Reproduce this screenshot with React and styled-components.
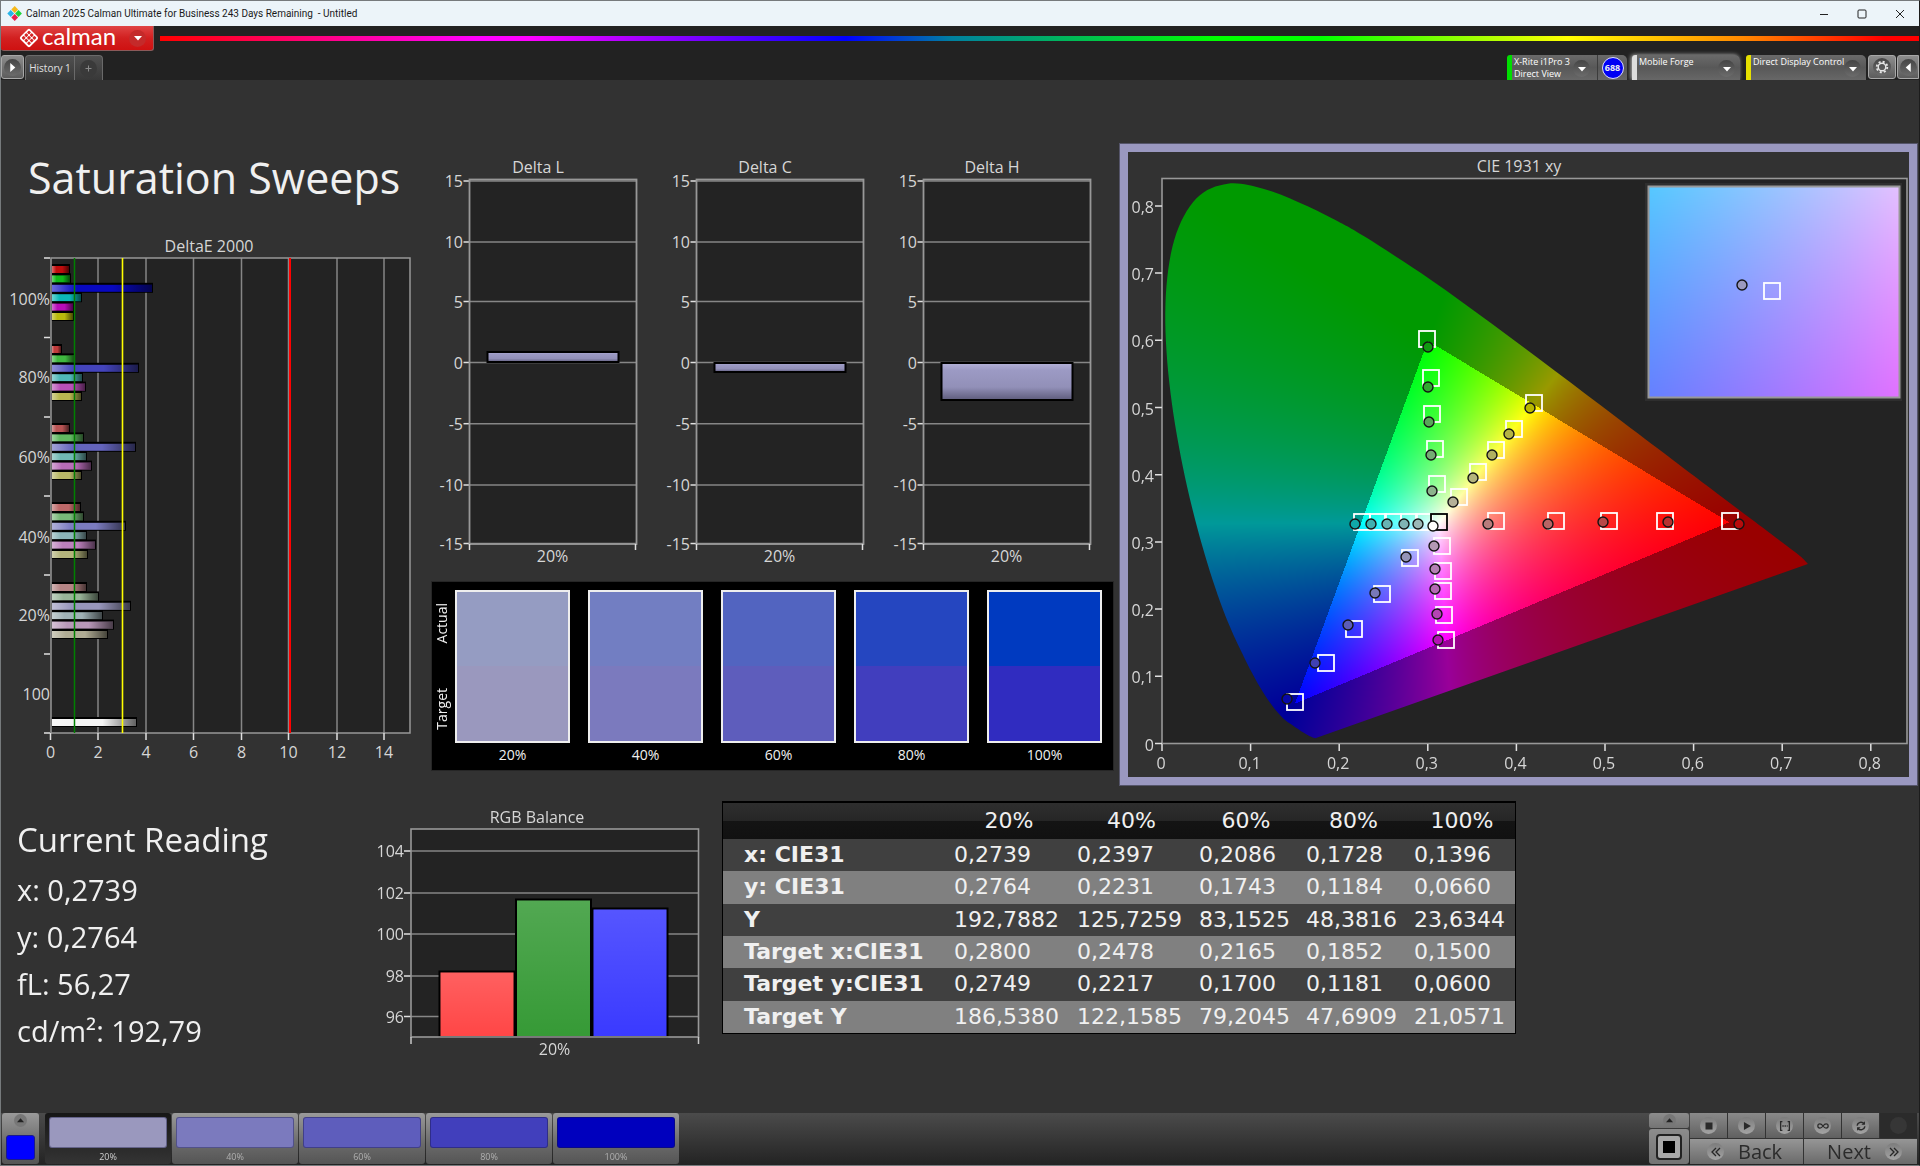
import React, { useEffect, useRef } from "react";
import styled, { createGlobalStyle } from "styled-components";

const GlobalStyle = createGlobalStyle`
  *, *::before, *::after { box-sizing: border-box; }
  body {
    margin: 0;
    background: #323232;
    color: #f0f0f0;
    font-family: "Open Sans", "Noto Sans", sans-serif;
  }
  button { font: inherit; color: inherit; border: 0; padding: 0; margin: 0; cursor: pointer; }
  h1, h2, p { margin: 0; font-weight: 400; }
`;

/* ---------- window frame ---------- */

const Window = styled.div`
  display: flex;
  flex-direction: column;
  min-height: 100vh;
  border: 1px solid #767a7c;
  border-right-color: #1c1c1c;
`;

const TitleBar = styled.header`
  display: flex;
  align-items: center;
  height: 25px;
  padding-left: 6px;
  background: #ecf4f9;
  color: #1a1a1a;
  font-family: Roboto, sans-serif;
  font-size: 10px;
  white-space: pre;
`;

const TitleText = styled.span`
  flex: 1;
  padding-left: 4px;
`;

const WindowButton = styled.button`
  display: grid;
  place-items: center;
  width: 38px;
  height: 25px;
  background: none;
`;

const Header = styled.div`
  background: #222;
`;

const BrandRow = styled.div`
  display: flex;
  align-items: flex-start;
  gap: 6px;
  height: 29px;
`;

const BrandButton = styled.button`
  display: flex;
  align-items: center;
  width: 153px;
  height: 25px;
  padding: 0 4px 0 18px;
  gap: 3px;
  border: 1px solid #8b5a5a;
  border-top: 0;
  border-left: 0;
  border-radius: 0 0 3px 3px;
  background: linear-gradient(#e04545, #d22020 50%, #cf1111);
  color: #fff;
`;

const BrandName = styled.span`
  flex: 1;
  text-align: left;
  font-family: Lato, sans-serif;
  font-size: 24px;
  line-height: 20px;
  height: 25px;
`;

const RoundMark = styled.span`
  display: grid;
  place-items: center;
  flex: none;
  width: ${(p) => p.$size || 17}px;
  height: ${(p) => p.$size || 17}px;
  border-radius: 50%;
  background: ${(p) => p.$fill || "linear-gradient(#454545, #6c6c6c)"};
`;

const Rainbow = styled.div`
  flex: 1;
  height: 5px;
  margin-top: 10px;
  background: linear-gradient(
    90deg,
    #f00 0%, #f0f 18%, #f0f 21%, #00f 39%, #0080a0 45%, #0f0 60%,
    #0f0 66%, #ff0 80%, #f80 90%, #f00 98%
  );
`;

const TabRow = styled.div`
  display: flex;
  align-items: flex-start;
  height: 25px;
`;

const Tab = styled.button`
  height: 25px;
  width: ${(p) => p.$width}px;
  display: grid;
  place-items: center;
  border: 1px solid #6a6a6a;
  border-bottom: 0;
  border-left-width: ${(p) => (p.$joined ? 0 : 1)}px;
  border-radius: ${(p) => (p.$joined ? "0 4px 0 0" : "4px 0 0 0")};
  background: linear-gradient(#505050, #383838);
  color: #e2e2e2;
  font-size: 10px;
`;

const SquareButton = styled.button`
  display: grid;
  place-items: center;
  height: 24px;
  width: ${(p) => p.$width}px;
  margin-right: ${(p) => p.$after || 0}px;
  border: 1px solid #a8a8a8;
  border-radius: ${(p) => p.$radius || "3px"};
  background: linear-gradient(#8d8d8d, #5c5c5c);
`;

const Spacer = styled.div`
  flex: 1;
`;

const SourceGroup = styled.div`
  display: flex;
  height: 25px;
  width: ${(p) => p.$width}px;
  margin-right: ${(p) => p.$after}px;
  border-left: 5px solid ${(p) => p.$accent};
  border-radius: 3px 5px 0 0;
  background: linear-gradient(#6a6a6a, #585858 50%, #676767);
  box-shadow: ${(p) => (p.$glow ? "-1px 0 4px #bbb" : "none")};
`;

const SourceButton = styled.button`
  flex: 1;
  display: flex;
  align-items: flex-start;
  justify-content: space-between;
  padding: 1px 5px 0 2px;
  background: none;
  color: #fff;
  font-size: 9px;
  line-height: 12px;
  text-align: left;
  white-space: nowrap;
`;

const SourceMark = styled(RoundMark)`
  margin-top: 4px;
`;

const CounterCell = styled.div`
  display: grid;
  place-items: center;
  width: 30px;
  margin-left: 2px;
  border-left: 1px solid #3c3c3c;
`;

const Counter = styled.span`
  width: 22px;
  height: 22px;
  border: 1px solid #dcdcff;
  border-radius: 50%;
  background: #0000f4;
  font-size: 9px;
  font-weight: 700;
  line-height: 20px;
  text-align: center;
`;

/* ---------- workspace ---------- */

const Workspace = styled.main`
  flex: 1;
  display: flex;
  flex-direction: column;
  gap: 10px;
  padding: 64px 2px 0 0;
  background: #323232;
`;

const TopRow = styled.section`
  display: grid;
  grid-template-columns: 431px 681px minmax(0, 1fr);
  align-items: start;
`;

const PageTitle = styled.h1`
  padding: 4px 0 22px 27px;
  font-size: 43px;
  line-height: 60px;
`;

const Chart = styled.svg`
  display: block;
  width: ${(p) => p.$width};
  height: auto;
  margin-left: ${(p) => (p.$pull ? -1 : 0)}px;
  font-size: 16px;
  fill: #d6d6d6;
`;

const MiddleColumn = styled.div`
  padding-top: 6px;
`;

const DeltaRow = styled.div`
  display: grid;
  grid-template-columns: repeat(3, 1fr);
`;

const SwatchPanel = styled.div`
  display: flex;
  height: 188px;
  margin-top: 12px;
  padding: 8px 11px 0 2px;
  background: #000;
  box-shadow: 0 0 0 1px #262626;
`;

const SwatchSides = styled.div`
  display: flex;
  flex-direction: column;
  justify-content: space-between;
  width: 21px;
  height: 153px;
  padding: 13px 0;
  font-size: 14px;
`;

const SideLabel = styled.span`
  writing-mode: vertical-rl;
  transform: rotate(180deg);
  align-self: flex-start;
  line-height: 16px;
  font-weight: 500;
`;

const SwatchList = styled.div`
  flex: 1;
  display: grid;
  grid-template-columns: repeat(5, 1fr);
  gap: 18px;
`;

const Swatch = styled.figure`
  margin: 0;
  text-align: center;
  font-size: 14px;
  line-height: 24px;
`;

const SwatchColors = styled.div`
  height: 153px;
  border: 2px solid #eee;
  background: linear-gradient(${(p) => p.$actual} 50%, ${(p) => p.$target} 50%);
`;

const CiePanel = styled.div`
  margin-left: 7px;
  border: 8px solid #9a98c0;
  outline: 1px solid #55556a;
  background: #323232;
`;

const BottomRow = styled.section`
  display: flex;
  align-items: flex-start;
`;

const Reading = styled.div`
  width: 369px;
  padding: 22px 0 0 16px;
`;

const ReadingTitle = styled.h2`
  font-size: 33px;
  line-height: 46px;
`;

const ReadingLine = styled.p`
  font-size: 29px;
  line-height: 47px;
  height: 47px;
  &:first-of-type { margin-top: 3px; }
`;

const DataTable = styled.table`
  width: 794px;
  height: 233px;
  margin: 6px 0 0 2px;
  border: 1px solid #000;
  border-top-width: 2px;
  border-collapse: separate;
  border-spacing: 0;
  table-layout: fixed;
  font-family: "DejaVu Sans", sans-serif;
  font-size: 22px;
  line-height: 26px;

  th, td { padding: 0 0 0 8px; text-align: left; white-space: nowrap; font-weight: 400; }
  thead th {
    height: 36px;
    padding: 0 0 0 3px;
    text-align: center;
    background: linear-gradient(#2e2e2e, #262626 50%, #141414 50%, #111);
  }
  tbody th { padding-left: 21px; font-weight: 700; }
  tbody tr { background: #404040; }
  tbody tr:nth-child(even) { background: #808080; }
`;

/* ---------- bottom strip ---------- */

const Strip = styled.footer`
  display: flex;
  align-items: flex-start;
  height: 52px;
  padding: 0 2px 0 1px;
  background: linear-gradient(#4b4b4b, #232323);
`;

const metal = "linear-gradient(#9a9a9a, #6a6a6a 60%, #555)";

const ColorPicker = styled.button`
  display: flex;
  flex-direction: column;
  align-items: center;
  gap: 8px;
  width: 37px;
  height: 51px;
  margin-right: 6px;
  padding-top: 1px;
  border-radius: 3px;
  background: ${metal};
`;

const ColorChip = styled.span`
  width: 29px;
  height: 25px;
  border: 1px solid #1a1a8c;
  border-radius: 3px;
  background: #00f;
`;

const Patch = styled.button`
  width: 126px;
  height: 51px;
  margin-right: 1px;
  padding: 4px 4px 0;
  border-radius: 3px;
  background: ${(p) => (p.$active ? "linear-gradient(#161616, #343434)" : metal)};
  color: ${(p) => (p.$active ? "#cfcfcf" : "#b0b0b0")};
  font-size: 9px;
  line-height: 18px;
`;

const PatchColor = styled.span`
  display: block;
  height: 31px;
  border: 1px solid rgba(20, 20, 60, 0.4);
  border-radius: 3px;
  background: ${(p) => p.$color};
`;

const PatternBox = styled.div`
  display: flex;
  flex-direction: column;
  width: 40px;
  height: 51px;
  margin-right: 1px;
`;

const PatternButton = styled.button`
  display: grid;
  place-items: center;
  height: ${(p) => p.$height}px;
  border-bottom: ${(p) => (p.$line ? "1px solid #3a3a3a" : 0)};
  border-radius: 3px;
  background: linear-gradient(#8c8c8c, #747474);
`;

const Transport = styled.div`
  display: grid;
  grid-template-columns: repeat(6, 37px);
  grid-template-rows: 25px 25px;
  gap: 1px;
  background: #333;
`;

const TransportButton = styled.button`
  display: grid;
  place-items: center;
  background: ${(p) => (p.disabled ? "#2b2b2b" : "linear-gradient(#8a8a8a, #606060)")};
`;

const StepButton = styled.button`
  grid-column: span 3;
  display: flex;
  align-items: center;
  justify-content: ${(p) => (p.$end ? "flex-end" : "flex-start")};
  gap: 14px;
  padding: 0 15px 0 17px;
  background: linear-gradient(#969696, #6a6a6a);
  color: #2b2b2b;
  font-size: 20px;
  line-height: 24px;
`;

/* ---------- icons ---------- */

const Triangle = ({ dir = "down", color = "#fff", size = 8 }) => {
  const d = { down: "M0 2h8L4 6.500z", up: "M0 6h8L4 1.500z", right: "M2 0v8l4.500-4z", left: "M6 0v8L1.500 4z" }[dir];
  return <svg width={size} height={size} viewBox="0 0 8 8"><path d={d} fill={color} /></svg>;
};

const AppIcon = () => (
  <svg width="15" height="15" viewBox="0 0 15 15">
    <rect x="5.300" y="1.100" width="4.800" height="4.800" transform="rotate(45 7.700 3.500)" fill="#f6b91a" />
    <rect x="1.300" y="5.100" width="4.800" height="4.800" transform="rotate(45 3.700 7.500)" fill="#28b4e8" />
    <rect x="9.100" y="5.100" width="4.800" height="4.800" transform="rotate(45 11.500 7.500)" fill="#1fd33b" />
    <rect x="5.300" y="9.100" width="4.800" height="4.800" transform="rotate(45 7.700 11.500)" fill="#e8204c" />
  </svg>
);

const BrandIcon = () => (
  <svg width="20" height="20" viewBox="0 0 20 20">
    <g transform="rotate(45 10 10)">
      <rect x="3" y="3" width="14" height="14" rx="2" fill="#fff" />
      <g fill="#d62626">
        {[4.6, 8.4, 12.2].map((x) =>
          [4.6, 8.4, 12.2].map((y) => <rect key={`${x}-${y}`} x={x} y={y} width="3" height="3" rx=".8" />)
        )}
      </g>
    </g>
  </svg>
);

const GearIcon = () => (
  <svg width="14" height="14" viewBox="0 0 14 14" fill="none" stroke="#e6e6e6">
    <circle cx="7" cy="7" r="3.800" strokeWidth="1.400" />
    <circle cx="7" cy="7" r="5.300" strokeWidth="1.800" strokeDasharray="2.080 2.080" />
  </svg>
);

const transportIcons = {
  Stop: <rect x="4" y="4" width="8" height="8" fill="#2a2a2a" />,
  Play: <path d="M4.500 3.500v9l8-4.500z" fill="#2a2a2a" />,
  "Play range": (
    <g stroke="#2a2a2a" strokeWidth="1.500" fill="none">
      <path d="M5 3H3v10h2M11 3h2v10h-2" />
      <path d="M5 8h6" strokeDasharray="1.500 1" />
    </g>
  ),
  Continuous: (
    <path
      d="M8 8C6.500 6 5.500 5.600 4.500 5.600a2.400 2.400 0 0 0 0 4.800C5.500 10.400 6.500 10 8 8s2.500-2.400 3.500-2.400a2.400 2.400 0 0 1 0 4.800C10.500 10.400 9.500 10 8 8z"
      stroke="#2a2a2a" strokeWidth="1.400" fill="none"
    />
  ),
  Refresh: (
    <g stroke="#2a2a2a" strokeWidth="1.700" fill="none">
      <path d="M3.500 7.500a4.500 4.500 0 0 1 8-2M12.500 8.500a4.500 4.500 0 0 1-8 2" />
      <path d="M12.500 2.500v4h-4zM3.500 13.500v-4h4z" fill="#2a2a2a" stroke="none" />
    </g>
  ),
};

const Chevrons = ({ right }) => (
  <svg width="12" height="12" viewBox="0 0 12 12" fill="none" stroke="#262626" strokeWidth="1.300">
    <path d={right ? "M2 2l4 4-4 4M6 2l4 4-4 4" : "M10 2L6 6l4 4M6 2L2 6l4 4"} />
  </svg>
);

/* ---------- charts ---------- */

const GRID = "#868686";
const PLOT = "#232323";

const deltaEGroups = [
  { y: 269, ends: [70, 71, 153, 82, 74, 74], colors: ["#c00c0c", "#10b818", "#0808c0", "#0cb8b8", "#b80cb8", "#b8b80c"] },
  { y: 349, ends: [62, 75, 139, 83, 86, 82], colors: ["#c03c3c", "#40b840", "#4444bc", "#50b8b8", "#b850b8", "#b8b850"] },
  { y: 428, ends: [70, 84, 136, 87, 92, 82], colors: ["#b85454", "#60b860", "#6464bc", "#70b8b4", "#b86cb8", "#b8b868"] },
  { y: 507, ends: [81, 84, 126, 87, 96, 88], colors: ["#bc6868", "#78b878", "#7c7cc0", "#8cb4b8", "#bc80bc", "#b4b47c"] },
  { y: 587, ends: [87, 99, 131, 103, 114, 108], colors: ["#b48484", "#98b498", "#9896bc", "#a0b2b6", "#b898b8", "#b0ac94"] },
  { y: 722, ends: [137], colors: ["#f4f4f4"] },
];

const DeltaEChart = () => (
  <Chart $width="420px" $pull viewBox="0 230 420 540" role="img" aria-label="DeltaE 2000">
    <defs>
      <linearGradient id="barShade">
        <stop offset="0" stopColor="#fff" stopOpacity=".4" />
        <stop offset=".25" stopColor="#fff" stopOpacity="0" />
        <stop offset=".6" stopColor="#000" stopOpacity="0" />
        <stop offset="1" stopColor="#000" stopOpacity=".6" />
      </linearGradient>
    </defs>
    <text x="209" y="252" textAnchor="middle">DeltaE 2000</text>
    <rect x="51" y="258" width="359" height="475" fill={PLOT} />
    {[98, 146, 193.5, 241.5, 288.5, 337, 384].map((x) => (
      <path key={x} d={`M${x} 258V733`} stroke={GRID} strokeWidth="1.500" />
    ))}
    {deltaEGroups.map((g) =>
      g.ends.map((end, i) => {
        const y = g.y + i * 9.4 - 4;
        return (
          <g key={`${g.y}-${i}`}>
            <rect x="51" y={y - 1} width={end - 51} height="10" fill="#000" />
            <rect x="52" y={y + 1} width={end - 53} height="7" fill={g.colors[i]} />
            <rect x="52" y={y + 1} width={end - 53} height="7" fill="url(#barShade)" />
          </g>
        );
      })
    )}
    <rect x="51" y="258" width="359" height="475" fill="none" stroke="#989898" strokeWidth="1.500" />
    {[258, 337.5, 417, 496, 575, 654, 733].map((y) => (
      <path key={y} d={`M44 ${y}H50`} stroke="#e0e0e0" strokeWidth="1.500" />
    ))}
    {[50.5, 98, 146, 193.5, 241.5, 288.5, 337, 384].map((x, i) => (
      <g key={x}>
        <path d={`M${x} 733v7`} stroke="#e0e0e0" strokeWidth="1.500" />
        <text x={x} y="758" textAnchor="middle">{i * 2}</text>
      </g>
    ))}
    <path d="M74.500 258V733" stroke="#008000" strokeWidth="1.500" />
    <path d="M122.500 258V733" stroke="#ff0" strokeWidth="1.600" />
    <path d="M290 258V733" stroke="#f00" strokeWidth="2" />
    {[["100%", 305], ["80%", 383], ["60%", 463], ["40%", 543], ["20%", 621], ["100", 700]].map(([t, y]) => (
      <text key={y} x="50" y={y} textAnchor="end">{t}</text>
    ))}
  </Chart>
);

const deltaTicks = [[15, 181], [10, 242], [5, 301.5], [0, 362.5], [-5, 423.7], [-10, 485], [-15, 543.5]];

const DeltaChart = ({ title, top, bottom }) => (
  <Chart $width="100%" viewBox="432 150 227 420" role="img" aria-label={title}>
    <defs>
      <linearGradient id="deltaShade" x2="0" y2="1">
        <stop offset="0" stopColor="#b4b2d8" />
        <stop offset=".2" stopColor="#9c9ac4" />
        <stop offset=".65" stopColor="#9290b8" />
        <stop offset="1" stopColor="#5e5c7c" />
      </linearGradient>
    </defs>
    <text x="538" y="173" textAnchor="middle">{title}</text>
    <rect x="469.500" y="179" width="167" height="365" fill={PLOT} />
    {deltaTicks.map(([v, y]) => (
      <g key={v}>
        <path d={`M470 ${y}H636`} stroke={GRID} strokeWidth="1.500" />
        <path d={`M463.500 ${y}H469`} stroke="#e0e0e0" strokeWidth="1.500" />
        <text x="463" y={y + 6} textAnchor="end">{v}</text>
      </g>
    ))}
    <rect x="469.500" y="179.500" width="167" height="364.500" fill="none" stroke="#989898" strokeWidth="1.800" />
    <path d="M469.500 544v6M635.500 544v6" stroke="#e0e0e0" strokeWidth="1.500" />
    <rect x="487.500" y={top} width="131" height={bottom - top} fill="url(#deltaShade)" stroke="#000" strokeWidth="2" />
    <text x="552.500" y="562" textAnchor="middle">20%</text>
  </Chart>
);

const RgbChart = () => (
  <Chart $width="350px" viewBox="370 795 350 275" role="img" aria-label="RGB Balance">
    <defs>
      <linearGradient id="rgbShade" x2="0" y2="1">
        <stop offset="0" stopColor="#fff" stopOpacity=".14" />
        <stop offset="1" stopColor="#fff" stopOpacity="0" />
      </linearGradient>
    </defs>
    <text x="537" y="823" textAnchor="middle">RGB Balance</text>
    <rect x="411" y="829" width="287.500" height="208" fill={PLOT} />
    {[[104, 851], [102, 893], [100, 934], [98, 976], [96, 1016.5]].map(([v, y]) => (
      <g key={v}>
        <path d={`M411 ${y}H698`} stroke={GRID} strokeWidth="1.500" />
        <path d={`M404 ${y}h7`} stroke="#e0e0e0" strokeWidth="1.500" />
        <text x="404" y={y + 6} textAnchor="end">{v}</text>
      </g>
    ))}
    {[[439.5, 971.5, "#ff4646"], [516, 899.5, "#369a36"], [592.5, 908.5, "#3a3aff"]].map(([x, y, c]) => (
      <g key={x}>
        <rect x={x} y={y} width="75" height={1037 - y} fill={c} stroke="#000" strokeWidth="2" />
        <rect x={x + 1} y={y + 1} width="73" height={1036 - y} fill="url(#rgbShade)" />
      </g>
    ))}
    <rect x="411" y="829" width="287.500" height="208" fill="none" stroke="#989898" strokeWidth="1.600" />
    <path d="M411 1037v7M698.500 1037v7" stroke="#c8c8c8" strokeWidth="1.500" />
    <text x="554.500" y="1055" textAnchor="middle">20%</text>
  </Chart>
);

/* CIE 1931 spectral locus, clockwise from violet to red */
const locus = [
  [0.173, 0.0087], [0.1689, 0.0105], [0.1644, 0.0135], [0.1566, 0.0195], [0.144, 0.0307], [0.1355, 0.0399],
  [0.1241, 0.0578], [0.1096, 0.0868], [0.0913, 0.1327], [0.0687, 0.2007], [0.0454, 0.295], [0.0235, 0.4127],
  [0.0082, 0.5384], [0.0039, 0.6548], [0.0139, 0.7502], [0.0389, 0.812], [0.0743, 0.8338], [0.1142, 0.8262],
  [0.1547, 0.8059], [0.1929, 0.7816], [0.2296, 0.7543], [0.3016, 0.6923], [0.3731, 0.6245], [0.4441, 0.5547],
  [0.5125, 0.4866], [0.5752, 0.4242], [0.627, 0.3725], [0.6658, 0.334], [0.6915, 0.3083], [0.719, 0.2809],
  [0.729, 0.268],
];

/* Linear sRGB for a chromaticity, scaled so the strongest channel is full; dimmed outside the gamut */
function chromaColor(x, y) {
  const X = x / y;
  const Z = (1 - x - y) / y;
  const rgb = [
    3.2406 * X - 1.5372 - 0.4986 * Z,
    -0.9689 * X + 1.8758 + 0.0415 * Z,
    0.0557 * X - 0.204 + 1.057 * Z,
  ];
  const level = Math.min(...rgb) < 0 ? 153 : 255;
  const max = Math.max(...rgb);
  return rgb.map((v) => (Math.max(0, v) / max) * level);
}

function fillChroma(w, h, toXY) {
  const canvas = document.createElement("canvas");
  canvas.width = w;
  canvas.height = h;
  const ctx = canvas.getContext("2d");
  const img = ctx.createImageData(w, h);
  for (let j = 0; j < h; j++) {
    for (let i = 0; i < w; i++) {
      const [x, y] = toXY(i + 0.5, j + 0.5);
      const [r, g, b] = chromaColor(x, Math.max(y, 0.001));
      img.data.set([r, g, b, 255], (j * w + i) * 4);
    }
  }
  ctx.putImageData(img, 0, 0);
  return canvas;
}

const ORIGIN_X = 1162;
const ORIGIN_Y = 743.5;
const UNIT_X = 886;
const UNIT_Y = 672;
const PLOT_W = 745;
const PLOT_H = 565;

const ChromaCanvas = styled.canvas`
  display: block;
`;

function LocusCanvas() {
  const ref = useRef(null);
  useEffect(() => {
    const ctx = ref.current.getContext("2d");
    const pts = locus.map(([x, y]) => [x * UNIT_X, PLOT_H - y * UNIT_Y]);
    ctx.clearRect(0, 0, PLOT_W, PLOT_H);
    ctx.save();
    ctx.beginPath();
    ctx.moveTo(...pts[0]);
    for (let i = 0; i < pts.length - 1; i++) {
      const p0 = pts[i - 1] || pts[i];
      const p1 = pts[i];
      const p2 = pts[i + 1];
      const p3 = pts[i + 2] || p2;
      ctx.bezierCurveTo(
        p1[0] + (p2[0] - p0[0]) / 6, p1[1] + (p2[1] - p0[1]) / 6,
        p2[0] - (p3[0] - p1[0]) / 6, p2[1] - (p3[1] - p1[1]) / 6,
        p2[0], p2[1]
      );
    }
    ctx.closePath();
    ctx.clip();
    ctx.drawImage(fillChroma(PLOT_W, PLOT_H, (i, j) => [i / UNIT_X, (PLOT_H - j) / UNIT_Y]), 0, 0);
    ctx.restore();
  }, []);
  return <ChromaCanvas ref={ref} width={PLOT_W} height={PLOT_H} />;
}

function DetailCanvas() {
  const ref = useRef(null);
  useEffect(() => {
    const src = fillChroma(250, 210, (i, j) => [0.28 + (i - 125) / 4900, 0.2749 - (j - 105) / 4333]);
    ref.current.getContext("2d").drawImage(src, 0, 0);
  }, []);
  return <ChromaCanvas ref={ref} width={250} height={210} />;
}

const targets = [
  [1426, 339], [1430, 378], [1431, 414], [1434, 449], [1436, 484],
  [1533, 403], [1513, 429], [1495, 450], [1477, 472], [1458, 497],
  [1495, 521], [1555, 521], [1608, 521], [1664, 521], [1729, 521],
  [1361, 522], [1377, 522], [1392, 522], [1408, 522], [1423, 522],
  [1441, 546], [1442, 571], [1442, 591], [1443, 615], [1445, 640],
  [1409, 558], [1381, 594], [1353, 629], [1325, 663], [1294, 702],
];

const readings = [
  [1427, 347, "#109a10"], [1427, 387, "#30a830"], [1428, 422, "#58a858"], [1430, 455, "#74ac74"], [1431, 491, "#8cb48c"],
  [1529, 408, "#b8b800"], [1508, 434, "#b4b444"], [1491, 455, "#b0b060"], [1472, 478, "#b4b47c"], [1452, 502, "#b4b098"],
  [1487, 524, "#b87c7c"], [1547, 524, "#b86464"], [1602, 522, "#b84848"], [1667, 522, "#b83030"], [1738, 524, "#b80c0c"],
  [1354, 524, "#10a8a8"], [1370, 524, "#40b0b0"], [1386, 524, "#68b4b4"], [1403, 524, "#80b4b4"], [1417, 524, "#9cb8b8"],
  [1432, 526, "#fff"],
  [1433, 546, "#b498b4"], [1434, 569, "#b480b4"], [1434, 589, "#b468b4"], [1436, 614, "#b444b4"], [1437, 640, "#b410b4"],
  [1405, 557, "#9494b8"], [1374, 593, "#7878b8"], [1347, 625, "#5c5cb8"], [1314, 663, "#4040b4"], [1286, 699, "#0808a8"],
];

const TargetMark = ({ x, y, color = "#fff" }) => (
  <rect x={x - 8} y={y - 8} width="16" height="16" fill="none" stroke={color} strokeWidth="1.800" />
);

const ReadingMark = ({ x, y, color }) => (
  <circle cx={x} cy={y} r="5" fill={color} stroke="#141414" strokeWidth="1.400" />
);

const axisSteps = [0, 1, 2, 3, 4, 5, 6, 7, 8];

const CieChart = () => (
  <Chart $width="100%" viewBox="1128 152 781 625" role="img" aria-label="CIE 1931 xy">
    <text x="1519" y="172" textAnchor="middle">CIE 1931 xy</text>
    <rect x="1162" y="178.500" width={PLOT_W} height={PLOT_H} fill={PLOT} />
    <foreignObject x="1162" y="178.500" width={PLOT_W} height={PLOT_H}>
      <LocusCanvas />
    </foreignObject>
    <rect x="1162" y="178.500" width={PLOT_W} height={PLOT_H} fill="none" stroke="#989898" strokeWidth="1.600" />
    {axisSteps.map((n) => {
      const x = ORIGIN_X + (n / 10) * UNIT_X;
      const y = ORIGIN_Y - (n / 10) * UNIT_Y;
      const label = n === 0 ? "0" : `0,${n}`;
      return (
        <g key={n}>
          <path d={`M${x} 744v7M1155 ${y}h7`} stroke="#e0e0e0" strokeWidth="1.500" />
          <text x={x - 1} y="769" textAnchor="middle">{label}</text>
          <text x="1154" y={y + 7} textAnchor="end">{label}</text>
        </g>
      );
    })}
    <g transform="translate(1 0)">
      {targets.map(([x, y]) => <TargetMark key={`${x}-${y}`} x={x} y={y} />)}
      <TargetMark x={1438} y={522} color="#000" />
      {readings.map(([x, y, c]) => <ReadingMark key={`${x}-${y}`} x={x} y={y} color={c} />)}
    </g>
    <rect x="1645" y="183" width="257" height="218" fill="#2e2e2e" />
    <foreignObject x="1649" y="187" width="250" height="210">
      <DetailCanvas />
    </foreignObject>
    <rect x="1648.500" y="186.500" width="251" height="211" fill="none" stroke="#989898" strokeWidth="2" />
    <TargetMark x={1772} y={291} />
    <ReadingMark x={1742} y={285} color="#9c9abe" />
  </Chart>
);

/* ---------- data ---------- */

const swatches = [
  { level: "20%", actual: "#959cc2", target: "#9a98be", patch: "#9a98be" },
  { level: "40%", actual: "#727ec2", target: "#7b7abe", patch: "#7b7abe" },
  { level: "60%", actual: "#5264c0", target: "#5e5dbc", patch: "#5e5dbc" },
  { level: "80%", actual: "#2546c0", target: "#413ebe", patch: "#413fbc" },
  { level: "100%", actual: "#003ac0", target: "#302cc0", patch: "#0000be" },
];

const tableRows = [
  ["x: CIE31", "0,2739", "0,2397", "0,2086", "0,1728", "0,1396"],
  ["y: CIE31", "0,2764", "0,2231", "0,1743", "0,1184", "0,0660"],
  ["Y", "192,7882", "125,7259", "83,1525", "48,3816", "23,6344"],
  ["Target x:CIE31", "0,2800", "0,2478", "0,2165", "0,1852", "0,1500"],
  ["Target y:CIE31", "0,2749", "0,2217", "0,1700", "0,1181", "0,0600"],
  ["Target Y", "186,5380", "122,1585", "79,2045", "47,6909", "21,0571"],
];

const columnWidths = [223, 123, 122, 107, 108, 109];
const silver = "linear-gradient(#7c7c7c, #a4a4a4)";

export default function App() {
  return (
    <Window>
      <GlobalStyle />
      <TitleBar>
        <AppIcon />
        <TitleText>{"Calman 2025 Calman Ultimate for Business 243 Days Remaining  - Untitled"}</TitleText>
        <WindowButton aria-label="Minimize">
          <svg width="10" height="10" viewBox="0 0 10 10"><path d="M1 5.500h8" stroke="#222" /></svg>
        </WindowButton>
        <WindowButton aria-label="Maximize">
          <svg width="10" height="10" viewBox="0 0 10 10"><rect x="1" y="1" width="8" height="8" rx="1" fill="none" stroke="#222" /></svg>
        </WindowButton>
        <WindowButton aria-label="Close">
          <svg width="10" height="10" viewBox="0 0 10 10"><path d="M1 1l8 8M9 1L1 9" stroke="#222" /></svg>
        </WindowButton>
      </TitleBar>

      <Header>
        <BrandRow>
          <BrandButton aria-haspopup="menu">
            <BrandIcon />
            <BrandName>calman</BrandName>
            <RoundMark $fill="#c42a2a"><Triangle /></RoundMark>
            <span />
          </BrandButton>
          <Rainbow />
        </BrandRow>
        <TabRow>
          <SquareButton $width={23} $after={1} aria-label="Expand left panel">
            <RoundMark><Triangle dir="right" size={9} /></RoundMark>
          </SquareButton>
          <Tab $width={50}>History 1</Tab>
          <Tab $width={28} $joined aria-label="Add tab">
            <RoundMark $fill="#3a3a3a">
              <svg width="7" height="7" viewBox="0 0 7 7"><path d="M3.500 .5v6M.5 3.500h6" stroke="#8a8a8a" /></svg>
            </RoundMark>
          </Tab>
          <Spacer />
          <SourceGroup $width={120} $after={5} $accent="#0d0">
            <SourceButton aria-haspopup="menu">
              <span>X-Rite i1Pro 3<br />Direct View</span>
              <SourceMark><Triangle /></SourceMark>
            </SourceButton>
            <CounterCell><Counter>688</Counter></CounterCell>
          </SourceGroup>
          <SourceGroup $width={108} $after={6} $accent="#ddd" $glow>
            <SourceButton aria-haspopup="menu">
              <span>Mobile Forge</span>
              <SourceMark><Triangle /></SourceMark>
            </SourceButton>
          </SourceGroup>
          <SourceGroup $width={120} $after={2} $accent="#e6e000">
            <SourceButton aria-haspopup="menu">
              <span>Direct Display Control</span>
              <SourceMark><Triangle /></SourceMark>
            </SourceButton>
          </SourceGroup>
          <SquareButton $width={28} $after={1} aria-label="Settings">
            <RoundMark $size={18}><GearIcon /></RoundMark>
          </SquareButton>
          <SquareButton $width={22} $radius="3px 0 0 3px" aria-label="Expand right panel">
            <RoundMark><Triangle dir="left" size={9} /></RoundMark>
          </SquareButton>
        </TabRow>
      </Header>

      <Workspace>
        <TopRow>
          <div>
            <PageTitle>Saturation Sweeps</PageTitle>
            <DeltaEChart />
          </div>
          <MiddleColumn>
            <DeltaRow>
              <DeltaChart title="Delta L" top={352} bottom={362} />
              <DeltaChart title="Delta C" top={363} bottom={372} />
              <DeltaChart title="Delta H" top={363} bottom={400} />
            </DeltaRow>
            <SwatchPanel>
              <SwatchSides>
                <SideLabel>Actual</SideLabel>
                <SideLabel>Target</SideLabel>
              </SwatchSides>
              <SwatchList>
                {swatches.map((s) => (
                  <Swatch key={s.level}>
                    <SwatchColors $actual={s.actual} $target={s.target} />
                    <figcaption>{s.level}</figcaption>
                  </Swatch>
                ))}
              </SwatchList>
            </SwatchPanel>
          </MiddleColumn>
          <CiePanel><CieChart /></CiePanel>
        </TopRow>

        <BottomRow>
          <Reading>
            <ReadingTitle>Current Reading</ReadingTitle>
            <ReadingLine>x: 0,2739</ReadingLine>
            <ReadingLine>y: 0,2764</ReadingLine>
            <ReadingLine>fL: 56,27</ReadingLine>
            <ReadingLine>cd/m²: 192,79</ReadingLine>
          </Reading>
          <RgbChart />
          <DataTable>
            <colgroup>{columnWidths.map((w, i) => <col key={i} width={w} />)}</colgroup>
            <thead>
              <tr>
                <th aria-label="Measurement" />
                {swatches.map((s) => <th key={s.level} scope="col">{s.level}</th>)}
              </tr>
            </thead>
            <tbody>
              {tableRows.map(([name, ...values]) => (
                <tr key={name}>
                  <th scope="row">{name}</th>
                  {values.map((v) => <td key={v}>{v}</td>)}
                </tr>
              ))}
            </tbody>
          </DataTable>
        </BottomRow>
      </Workspace>

      <Strip>
        <ColorPicker aria-label="Pattern color">
          <RoundMark $size={13} $fill="#777"><Triangle dir="up" color="#222" size={7} /></RoundMark>
          <ColorChip />
        </ColorPicker>
        {swatches.map((s, i) => (
          <Patch key={s.level} $active={i === 0}>
            <PatchColor $color={s.patch} />
            {s.level}
          </Patch>
        ))}
        <Spacer />
        <PatternBox>
          <PatternButton $height={16} $line aria-label="Show patterns">
            <RoundMark $size={13} $fill="#777"><Triangle dir="up" color="#222" size={7} /></RoundMark>
          </PatternButton>
          <PatternButton $height={35} aria-label="Window pattern">
            <svg width="26" height="26" viewBox="0 0 26 26">
              <rect x="1" y="1" width="24" height="24" rx="3" fill="#a8a8a8" stroke="#222" strokeWidth="2" />
              <rect x="7" y="7" width="12" height="12" fill="#000" />
            </svg>
          </PatternButton>
        </PatternBox>
        <Transport>
          {Object.entries(transportIcons).map(([name, icon]) => (
            <TransportButton key={name} aria-label={name}>
              <RoundMark $fill={silver}><svg width="14" height="14" viewBox="0 0 16 16">{icon}</svg></RoundMark>
            </TransportButton>
          ))}
          <TransportButton disabled aria-label="Record"><RoundMark $fill="#363636" /></TransportButton>
          <StepButton>
            <RoundMark $fill={silver}><Chevrons /></RoundMark>
            Back
          </StepButton>
          <StepButton $end>
            Next
            <RoundMark $fill={silver}><Chevrons right /></RoundMark>
          </StepButton>
        </Transport>
      </Strip>
    </Window>
  );
}
